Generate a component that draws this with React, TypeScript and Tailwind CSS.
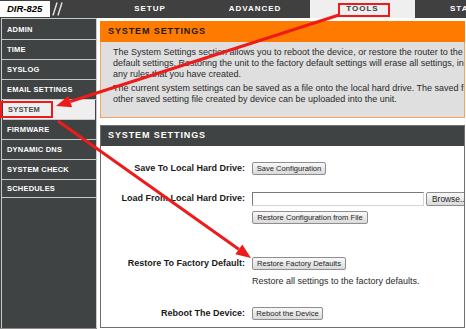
import React from 'react';

const sideItems = ['ADMIN', 'TIME', 'SYSLOG', 'EMAIL SETTINGS', 'SYSTEM', 'FIRMWARE', 'DYNAMIC DNS', 'SYSTEM CHECK', 'SCHEDULES'];

const introLines = [
    'The System Settings section allows you to reboot the device, or restore the router to the factory',
    'default settings. Restoring the unit to the factory default settings will erase all settings, including',
    'any rules that you have created.',
];
const introLines2 = [
    'The current system settings can be saved as a file onto the local hard drive. The saved file or any',
    'other saved setting file created by device can be uploaded into the unit.',
];

const Btn: React.FC<{ className?: string; children: React.ReactNode }> = ({ className = '', children }) => (
    <button
        className={`h-[13px] shrink-0 border border-[#8e8e8e] rounded-[2px] bg-gradient-to-b from-[#f8f8f8] to-[#dadada] text-[7.6px] leading-none text-[#1e1e1e] whitespace-nowrap overflow-hidden ${className}`}
    >
        {children}
    </button>
);

const Row: React.FC<{ label: string; className?: string; children: React.ReactNode }> = ({ label, className = '', children }) => (
    <div className={`flex items-start ${className}`}>
        <div className="w-[144px] shrink-0 text-right text-[9px] font-bold text-[#1a1a1a] leading-[13px] whitespace-nowrap">{label}</div>
        <div className="ml-[7px] flex flex-col">{children}</div>
    </div>
);

const Annotations = () => (
    <svg className="absolute left-0 top-0 pointer-events-none" width="466" height="329" viewBox="0 0 466 329">
        {/* boxes */}
        <rect x="339" y="4" width="50" height="12" fill="none" stroke="#ee1b1b" strokeWidth="2" />
        <rect x="1" y="102" width="51" height="15" fill="none" stroke="#ee1b1b" strokeWidth="2" />
        {/* arrow to SYSTEM */}
        <line x1="339" y1="15" x2="70.3" y2="101.5" stroke="#ee1b1b" strokeWidth="3" />
        <polygon points="56,106 72.1,107.2 68.5,95.8" fill="#ee1b1b" />
        {/* arrow to factory defaults */}
        <line x1="58" y1="121" x2="238.8" y2="249.3" stroke="#ee1b1b" strokeWidth="3" />
        <polygon points="251,258 235.3,254.2 242.3,244.4" fill="#ee1b1b" />
    </svg>
);

export default function App() {
    return (
        <div className="relative w-[466px] h-[329px] overflow-hidden bg-white font-['Liberation_Sans',Arial,sans-serif]">
            {/* top bar */}
            <div className="h-[18px] bg-[#404040] flex items-stretch overflow-hidden">
                <div className="shrink-0 mt-[1px] h-[16px] w-[50px] bg-white flex items-center pl-[7px] text-[9.5px] font-bold italic text-black">DIR-825</div>
                <svg width="14" height="18" viewBox="0 0 14 18" className="shrink-0">
                    <line x1="3" y1="15.5" x2="7" y2="2.5" stroke="#e6e6e6" strokeWidth="1.4" />
                    <line x1="8" y1="15.5" x2="12" y2="2.5" stroke="#e6e6e6" strokeWidth="1.4" />
                </svg>
                <div className="shrink-0 ml-[36px] w-[100px] flex items-center justify-center text-[8px] font-bold tracking-[1px] text-white">SETUP</div>
                <div className="shrink-0 w-[110px] flex items-center justify-center text-[8px] font-bold tracking-[1px] text-white">ADVANCED</div>
                <div className="shrink-0 w-[105px] bg-[#efefef] flex items-center justify-center text-[8px] font-bold tracking-[1px] text-[#404040]">TOOLS</div>
                <div className="shrink-0 pl-[35px] flex items-center text-[8px] font-bold tracking-[1px] text-white whitespace-nowrap">STATUS</div>
            </div>

            <div className="flex h-[311px]">
                {/* sidebar */}
                <div className="w-[97px] shrink-0 bg-[#404343] pl-[1px] border-b border-[#8a8a8a]">
                    <div className="h-full border-l border-r border-t border-[#c9c9c9] pt-[1px]">
                        {sideItems.map((item, i) => (
                            <div
                                key={item}
                                className={`${i === sideItems.length - 1 ? 'h-[18px]' : 'h-[20px]'} border-b border-[#c9c9c9] flex items-center pl-[5px] text-[7.5px] font-bold tracking-[0.2px] whitespace-nowrap ${item === 'SYSTEM' ? 'bg-[#efefef] text-[#4a4a4a] mx-[1px] pl-[4px]' : 'text-white'}`}
                            >
                                {item}
                            </div>
                        ))}
                    </div>
                </div>

                {/* main */}
                <div className="flex-1 min-w-0 pl-[3px] pr-[1px] pt-[3px] flex flex-col">
                    <div className="overflow-hidden">
                        <div className="h-[21px] bg-[#ff7b00] flex items-center pl-[8px] text-[9px] font-bold tracking-[0.9px] text-[#1a1a1a]">SYSTEM SETTINGS</div>
                        <div className="h-[76px] bg-[#dfdfdf] border-l border-r border-b border-[#f6a45c] pl-[12px] pt-[5px] text-[9px] leading-[11px] text-[#2a2a2a] whitespace-nowrap overflow-hidden">
                            {introLines.map((l) => (
                                <div key={l}>{l}</div>
                            ))}
                            <div className="mt-[3px]">
                                {introLines2.map((l) => (
                                    <div key={l}>{l}</div>
                                ))}
                            </div>
                        </div>
                    </div>

                    <div className="mt-[7px] h-[203px] border border-[#6e6e6e] overflow-hidden">
                        <div className="h-[20px] bg-[#404343] flex items-center pl-[7px] text-[9px] font-bold tracking-[0.9px] text-white">SYSTEM SETTINGS</div>

                        <Row label="Save To Local Hard Drive:" className="mt-[16px]">
                            <Btn className="w-[74px]">Save Configuration</Btn>
                        </Row>

                        <Row label="Load From Local Hard Drive:" className="mt-[17px]">
                            <div className="flex items-center">
                                <div className="shrink-0 w-[172px] h-[14px] bg-white border border-[#7a7a7a] border-b-[#d4d4d4] border-r-[#d4d4d4]" />
                                <Btn className="ml-[2px] w-[42px] h-[14px] text-[8.4px] text-left pl-[5px]">Browse...</Btn>
                            </div>
                            <Btn className="mt-[5px] w-[116px]">Restore Configuration from File</Btn>
                        </Row>

                        <Row label="Restore To Factory Default:" className="mt-[33px]">
                            <Btn className="w-[94px]">Restore Factory Defaults</Btn>
                            <div className="mt-[6px] text-[9px] leading-[11px] text-[#2a2a2a] whitespace-nowrap">Restore all settings to the factory defaults.</div>
                        </Row>

                        <Row label="Reboot The Device:" className="mt-[20px]">
                            <Btn className="w-[71px]">Reboot the Device</Btn>
                        </Row>
                    </div>
                </div>
            </div>

            <Annotations />
        </div>
    );
}
